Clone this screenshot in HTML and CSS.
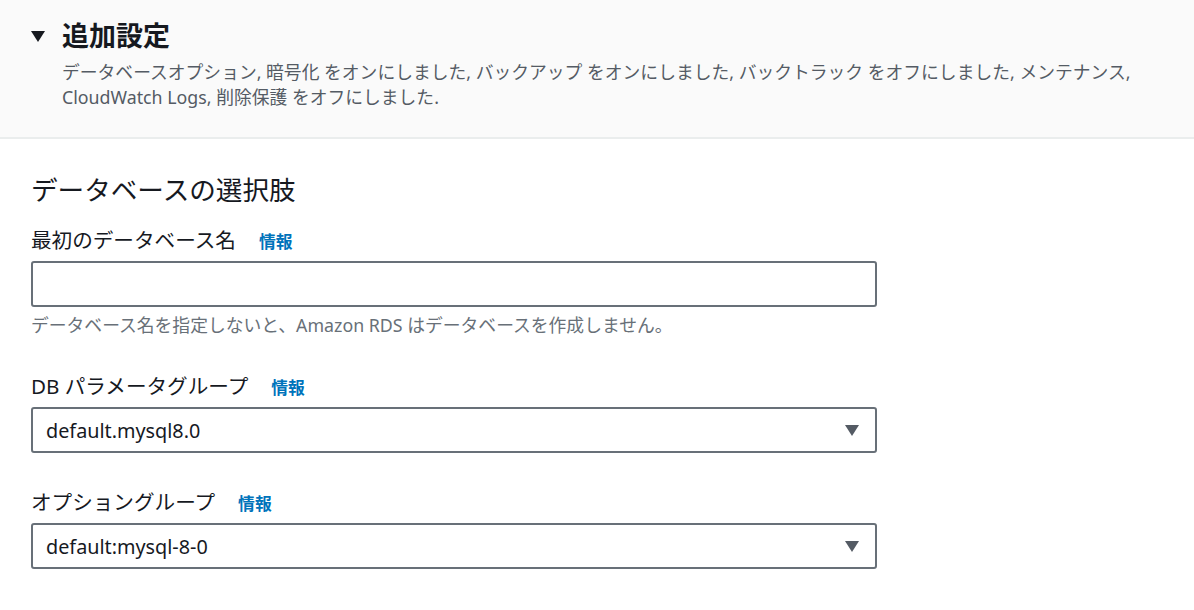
FILE: index.html
```html
<!DOCTYPE html>
<html lang="ja">
<head>
<meta charset="utf-8">
<link rel="stylesheet" href="styles.css">
</head>
<body>
<header class="section-header">
  <div class="title-row">
    <span class="caret"></span>
    <h2 class="title">追加設定</h2>
  </div>
  <p class="desc">データベースオプション, 暗号化 をオンにしました, バックアップ をオンにしました, バックトラック をオフにしました, メンテナンス, CloudWatch Logs, 削除保護 をオフにしました.</p>
</header>
<main class="content">
  <h3 class="subheading">データベースの選択肢</h3>

  <div class="field">
    <div class="label">最初のデータベース名<a class="info">情報</a></div>
    <div class="input"></div>
    <p class="hint">データベース名を指定しないと、Amazon RDS はデータベースを作成しません。</p>
  </div>

  <div class="field">
    <div class="label">DB パラメータグループ<a class="info">情報</a></div>
    <div class="select"><span class="value">default.mysql8.0</span><span class="arrow"></span></div>
  </div>

  <div class="field">
    <div class="label">オプショングループ<a class="info">情報</a></div>
    <div class="select"><span class="value">default:mysql-8-0</span><span class="arrow"></span></div>
  </div>
</main>
</body>
</html>
```

FILE: styles.css
```css
* { box-sizing: border-box; }
html, body {
  margin: 0;
  padding: 0;
  background: #ffffff;
  font-family: "Noto Sans", "Noto Sans CJK JP", sans-serif;
  color: #16191f;
}
.section-header {
  background: #fafafa;
  border-bottom: 2px solid #eaeded;
  padding: 20px 30px 27px 31px;
}
.title-row {
  display: flex;
  align-items: center;
  height: 32px;
}
.caret {
  width: 0;
  height: 0;
  border-left: 7px solid transparent;
  border-right: 7px solid transparent;
  border-top: 11px solid #16191f;
  margin-right: 17px;
}
.title {
  margin: 0;
  font-size: 27px;
  line-height: 32px;
  font-weight: 700;
  color: #16191f;
}
.desc {
  margin: 8px 0 0 31px;
  font-size: 17.8px;
  line-height: 25px;
  color: #545b64;
}
.content {
  padding: 35px 31px 20px 31px;
}
.subheading {
  margin: 0 0 20px 0;
  font-size: 26.6px;
  line-height: 32px;
  font-weight: 400;
  color: #16191f;
}
.field {
  width: 846px;
  margin-bottom: 35px;
}
.label {
  display: flex;
  align-items: baseline;
  height: 28px;
  font-size: 20.6px;
  line-height: 28px;
  color: #16191f;
  margin-bottom: 7px;
}
.info {
  color: #0073bb;
  font-weight: 700;
  font-size: 16.8px;
  margin-left: 23px;
}
.input, .select {
  height: 46px;
  border: 2px solid #687078;
  border-radius: 3px;
  background: #ffffff;
}
.select {
  display: flex;
  align-items: center;
  justify-content: space-between;
  padding: 0 16px 0 13px;
}
.value {
  font-size: 19.8px;
  color: #16191f;
}
.arrow {
  width: 0;
  height: 0;
  border-left: 7px solid transparent;
  border-right: 7px solid transparent;
  border-top: 11px solid #545b64;
}
.hint {
  margin: 6px 0 0 0;
  height: 24px;
  font-size: 17.8px;
  line-height: 24px;
  color: #687078;
}
```
